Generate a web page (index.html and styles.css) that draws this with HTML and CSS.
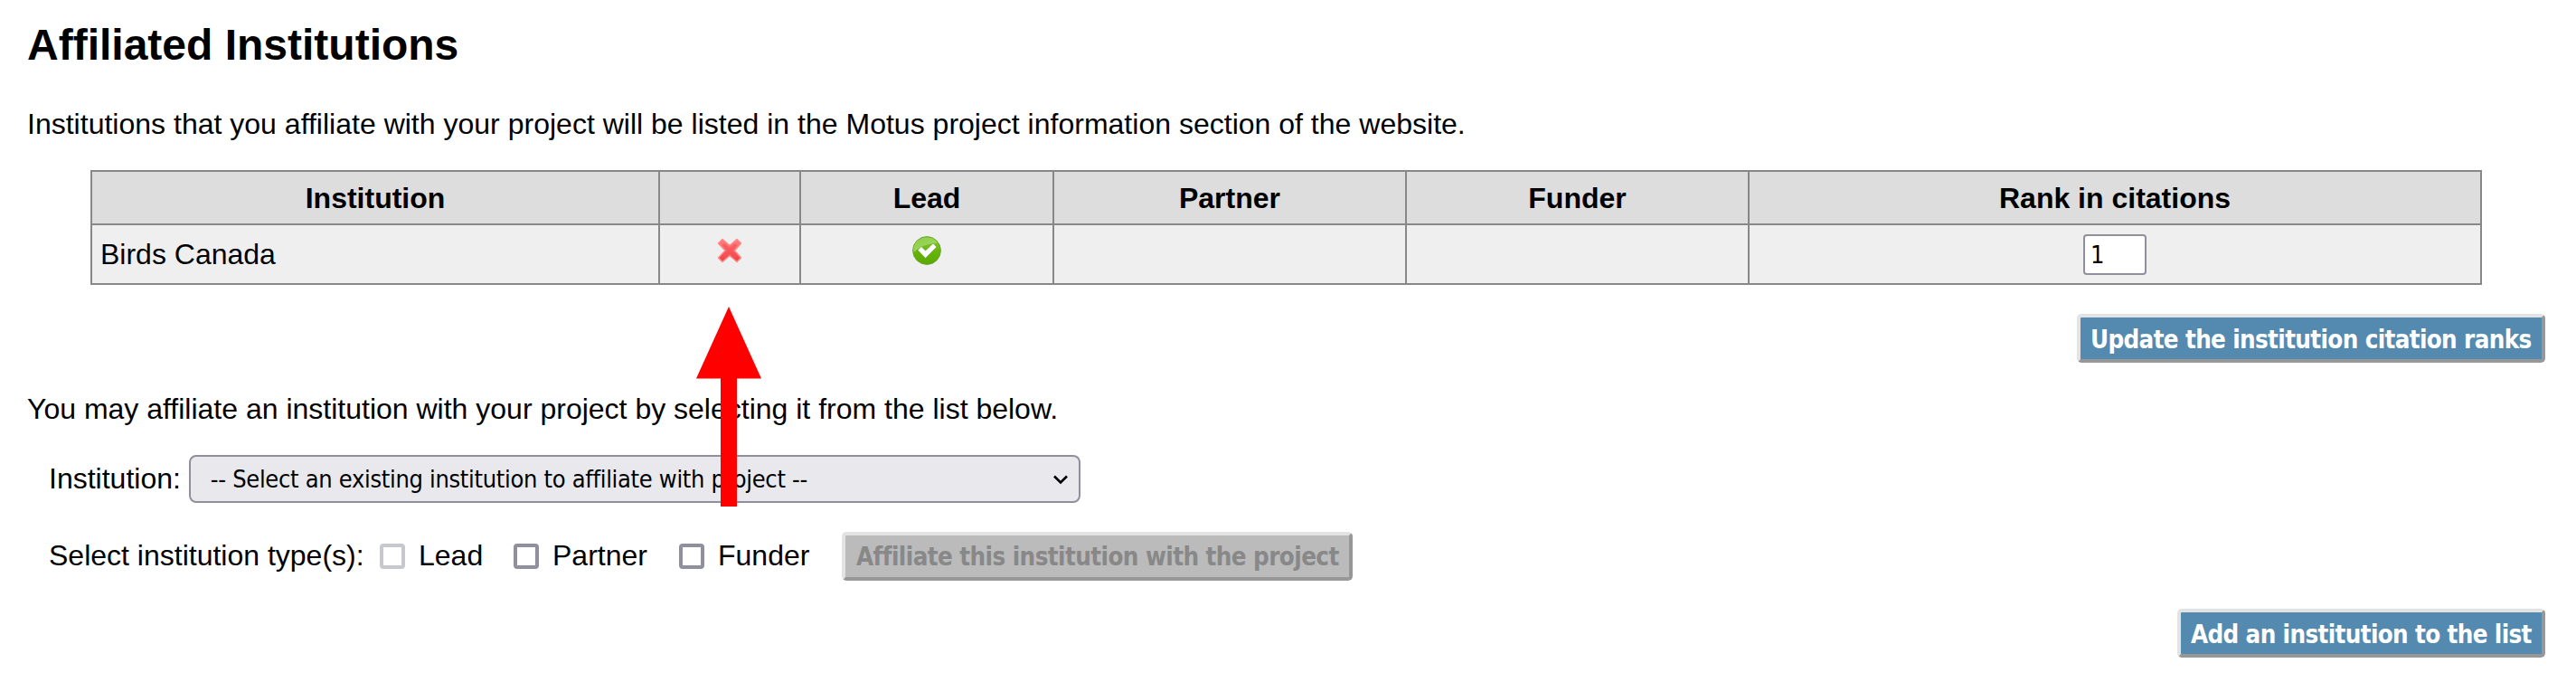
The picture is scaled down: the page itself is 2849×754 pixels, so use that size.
FILE: index.html
```html
<!DOCTYPE html>
<html lang="en">
<head>
<meta charset="utf-8">
<title>Affiliated Institutions</title>
<link rel="stylesheet" href="styles.css">
</head>
<body>
<main class="page">
  <h1 class="title">Affiliated Institutions</h1>
  <p class="intro"><span>Institutions that you affiliate with your project will be listed in the Motus project information section of the website.</span></p>
  <table class="grid">
    <colgroup><col class="c1"><col class="c2"><col class="c3"><col class="c4"><col class="c5"><col class="c6"></colgroup>
    <thead>
      <tr><th>Institution</th><th></th><th>Lead</th><th>Partner</th><th>Funder</th><th>Rank in citations</th></tr>
    </thead>
    <tbody>
      <tr>
        <td class="name">Birds Canada</td>
        <td>
          <svg class="icon" viewBox="0 0 32 32">
            <defs><linearGradient id="red" x1="0" y1="0" x2="0" y2="1"><stop offset="0" stop-color="#ff8080"/><stop offset="1" stop-color="#f23c40"/></linearGradient></defs>
            <path d="M8 3.500 3.500 8 11 16 3.500 24 8 28.500 16 21.500 24 28.500 28.500 24 21.500 16 28.500 8 24 3.500 16 10.500Z" fill="url(#red)" stroke="#fb8a8a" stroke-width="1.500" stroke-linejoin="round"/>
            <path d="M9 9 23 23M23 9 9 23" stroke="#fa5055" stroke-width="3" opacity=".6"/>
          </svg>
        </td>
        <td>
          <svg class="icon" viewBox="0 0 32 32">
            <defs><linearGradient id="green" x1="0" y1="0" x2="0" y2="1"><stop offset="0" stop-color="#87cf3c"/><stop offset=".5" stop-color="#68b50d"/><stop offset="1" stop-color="#5aa800"/></linearGradient>
            <linearGradient id="shine" x1="0" y1="0" x2=".4" y2="1"><stop offset="0" stop-color="#8ccc4c"/><stop offset="1" stop-color="#b4e67c"/></linearGradient></defs>
            <circle cx="16" cy="16" r="15.400" fill="url(#green)" stroke="#6aa52c" stroke-width="1"/>
            <path d="M1.500 18C0 8 7 1.500 16 1.500c6 0 10 3 12 6C17 8 8 12 1.500 18Z" fill="url(#shine)" opacity=".75"/>
            <path d="M6 15.500 10 11.500 14.500 16 23 8 27 12 14.500 24.500Z" fill="#fff" stroke="#5d9c18" stroke-width=".6"/>
          </svg>
        </td>
        <td></td>
        <td></td>
        <td><input class="rank" type="text" value="1"></td>
      </tr>
    </tbody>
  </table>
  <div class="actions first"><button class="btn update"><span>Update the institution citation ranks</span></button></div>
  <p class="hint">You may affiliate an institution with your project by selecting it from the list below.</p>
  <div class="row pick">
    <label>Institution:</label>
    <div class="select"><span class="value">-- Select an existing institution to affiliate with project --</span>
      <svg class="chevron" viewBox="0 0 16 11"><path d="M1 1.500 8 8.500 15 1.500" fill="none" stroke="#000" stroke-width="2.600"/></svg>
    </div>
  </div>
  <div class="row types">
    <span class="legend">Select institution type(s):</span>
    <label class="type lead"><i class="box off"></i><span>Lead</span></label>
    <label class="type partner"><i class="box"></i><span>Partner</span></label>
    <label class="type funder"><i class="box"></i><span>Funder</span></label>
    <button class="btn disabled" disabled><span>Affiliate this institution with the project</span></button>
  </div>
  <div class="actions last"><button class="btn add"><span>Add an institution to the list</span></button></div>
  <svg class="arrow" viewBox="0 0 72 221"><path d="M36 0 72 79.500H45V221H27V79.500H0Z" fill="#f00"/></svg>
</main>
</body>
</html>
```
FILE: styles.css
```css
* { box-sizing: border-box; }
body {
  margin: 0;
  background: #fff;
  color: #000;
  font: 32px/36px "Liberation Sans", Arial, sans-serif;
}
.page {
  position: relative;
  height: 754px;
  padding: 22px 34px 0 30px;
  overflow: hidden;
}
.title { margin: 0; font-size: 48px; line-height: 56px; white-space: nowrap; }
.intro { margin: 41px 0 0; height: 36px; letter-spacing: 0.01px; white-space: nowrap; }
.grid {
  width: 2645px;
  margin: 33px 0 0 70px;
  border-collapse: separate;
  border-spacing: 0;
  table-layout: fixed;
  border-top: 2px solid #888;
  border-left: 2px solid #888;
}
.grid th, .grid td {
  padding: 0;
  border-right: 2px solid #888;
  border-bottom: 2px solid #888;
  text-align: center;
}
.grid th { height: 59px; background: #ddd; }
.grid td { height: 66px; background: #efefef; }
.grid .name { padding-left: 9px; text-align: left; }
.c1 { width: 628px; }
.c2 { width: 156px; }
.c3 { width: 280px; }
.c4 { width: 390px; }
.c5 { width: 379px; }
.icon { display: block; width: 32px; height: 32px; margin: -8px auto 0; }
.rank {
  display: block;
  width: 70px;
  height: 45px;
  margin: 0 auto;
  padding: 1px 6px 0;
  border: 2px solid #8f8f9d;
  border-radius: 4px;
  background: #fff;
  font: condensed 27px "DejaVu Sans Condensed", "DejaVu Sans", sans-serif;
}
.actions { display: flex; justify-content: flex-end; }
.first { margin-top: 32px; }
.last { margin-top: 32px; }
.btn {
  display: flex;
  align-items: center;
  justify-content: flex-start;
  height: 54px;
  padding: 1px 0 0 11px;
  border: 4px solid;
  border-color: #e3e3e3 #979797 #979797 #e3e3e3;
  border-radius: 5px;
  background: #548ab0;
  color: #fff;
  font: condensed bold 27.5px/40px "DejaVu Sans Condensed", "DejaVu Sans", sans-serif;
  letter-spacing: -0.64px;
  white-space: nowrap;
}
.update { width: 518px; }
.add { width: 407px; }
.disabled { width: 565px; padding-left: 12px; background: #bbb; color: #888; letter-spacing: -0.57px; }
.hint { margin: 33px 0 0; white-space: nowrap; }
.row { display: flex; align-items: center; padding-left: 24px; white-space: nowrap; }
.pick { margin-top: 33px; height: 53px; }
.pick > label, .legend, .type span { padding-bottom: 2px; }
.select {
  display: flex;
  align-items: center;
  justify-content: space-between;
  width: 986px;
  height: 53px;
  margin-left: 9px;
  padding: 1px 12px 0 22px;
  border: 2px solid #8f8f9d;
  border-radius: 8px;
  background: #e9e9ed;
  font: condensed 27px/40px "DejaVu Sans Condensed", "DejaVu Sans", sans-serif;
  letter-spacing: -0.31px;
}
.chevron { width: 16px; height: 11px; }
.types { margin-top: 32px; height: 53px; }
.legend { width: 366px; }
.type { display: flex; align-items: center; gap: 15px; }
.lead { width: 148px; }
.partner { width: 183px; }
.funder { width: 180px; }
.box {
  width: 28px;
  height: 28px;
  border: 4px solid #8f8f9d;
  border-radius: 4px;
  background: #fff;
}
.off { border-color: #c7c7ce; }
.arrow { position: absolute; left: 770px; top: 339px; width: 72px; height: 221px; }
```
